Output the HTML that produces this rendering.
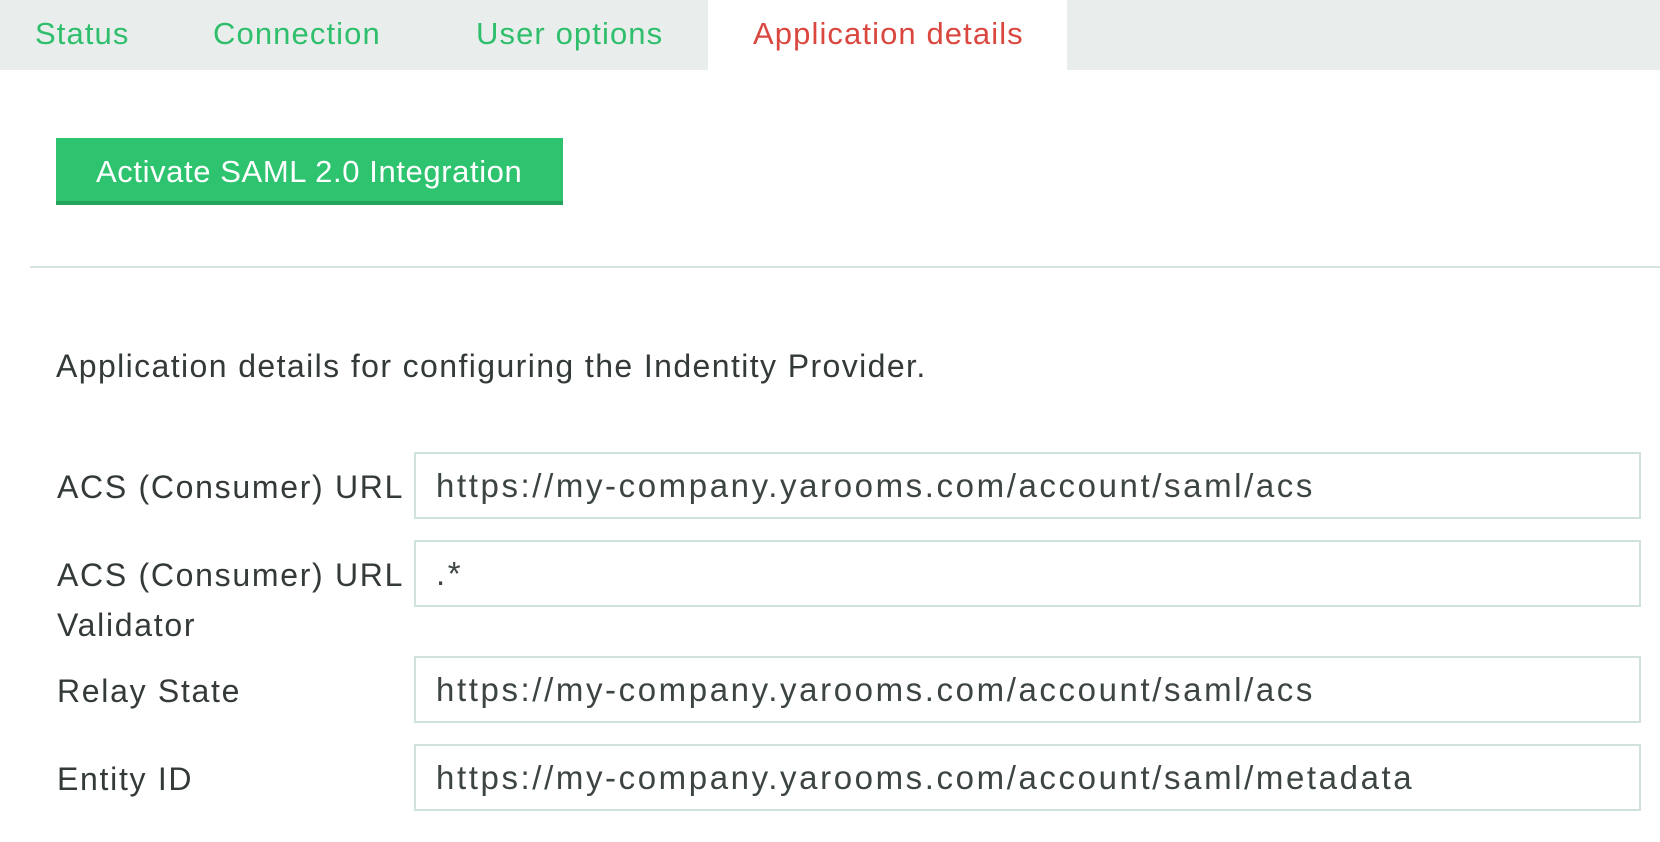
<!DOCTYPE html>
<html><head><meta charset="utf-8"><style>
*{margin:0;padding:0;box-sizing:border-box}
body{width:1660px;height:842px;background:#fff;font-family:"Liberation Sans",sans-serif;position:relative;overflow:hidden;color:#333a37}
.tabs{position:absolute;left:0;top:0;width:1660px;height:70px;background:#e9eeec}
.tab{position:absolute;top:16px;font-size:31px;letter-spacing:1.1px;color:#2fbf6c;white-space:nowrap}
.active{position:absolute;left:708px;top:0;width:359px;height:70px;background:#fff}
.btn{position:absolute;left:56px;top:138px;width:507px;height:67px;background:#2ec46f;border-bottom:4px solid #24a35a;color:#fff;font-size:31px;letter-spacing:0.6px;line-height:68px;padding-left:40px;white-space:nowrap}
.hr{position:absolute;left:30px;top:266px;width:1630px;height:2px;background:#d6e4e0}
.p{position:absolute;left:56px;top:348px;font-size:32px;letter-spacing:1.4px;white-space:nowrap}
.lbl{position:absolute;left:57px;font-size:32px;letter-spacing:1.7px;white-space:nowrap;line-height:50px}
.in{position:absolute;left:414px;width:1227px;height:67px;border:2px solid #d0e2dd;font-size:33px;letter-spacing:2.6px;color:#3d4542;padding-left:20px;line-height:63px;white-space:nowrap}
</style></head><body>
<div class="tabs">
<div class="active"></div>
<div class="tab" style="left:35px">Status</div>
<div class="tab" style="left:213px">Connection</div>
<div class="tab" style="left:476px">User options</div>
<div class="tab" style="left:753px;color:#d9473f">Application details</div>
</div>
<div class="btn">Activate SAML 2.0 Integration</div>
<div class="hr"></div>
<div class="p">Application details for configuring the Indentity Provider.</div>
<div class="lbl" style="top:462px">ACS (Consumer) URL</div>
<div class="in" style="top:452px">https://my-company.yarooms.com/account/saml/acs</div>
<div class="lbl" style="top:550px">ACS (Consumer) URL<br>Validator</div>
<div class="in" style="top:540px">.*</div>
<div class="lbl" style="top:666px">Relay State</div>
<div class="in" style="top:656px">https://my-company.yarooms.com/account/saml/acs</div>
<div class="lbl" style="top:754px">Entity ID</div>
<div class="in" style="top:744px">https://my-company.yarooms.com/account/saml/metadata</div>
</body></html>
